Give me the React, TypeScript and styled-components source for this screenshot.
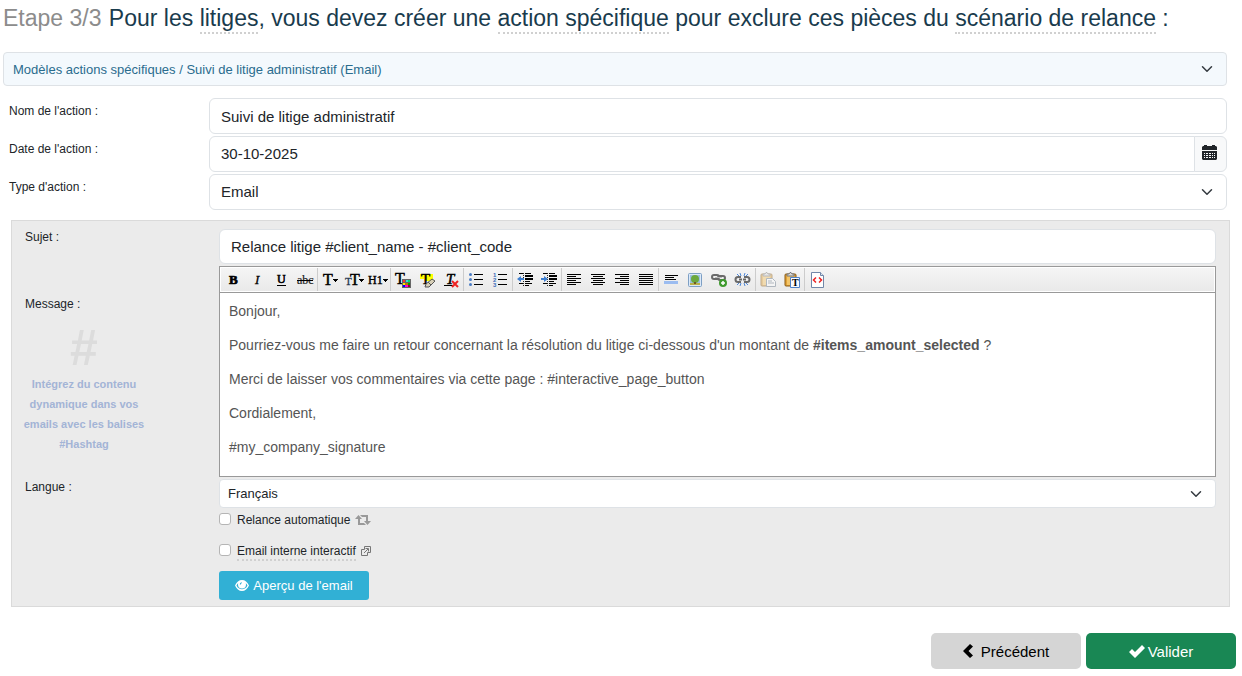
import React from "react";
import styled, { createGlobalStyle, css } from "styled-components";

const GlobalStyle = createGlobalStyle`
  *, *::before, *::after { box-sizing: border-box; }
  body {
    margin: 0;
    background: #fff;
    color: #212529;
    font-family: "Liberation Sans", Arial, sans-serif;
    font-size: 12px;
    line-height: 18px;
  }
  button, input, select { font-family: inherit; color: inherit; margin: 0; }
`;

const Page = styled.main`
  padding: 0 6px 7px 3px;
`;

const Title = styled.h1`
  margin: 0;
  height: 52px;
  padding-top: 4px;
  font-size: 23px;
  font-weight: 400;
  line-height: 28px;
  color: #193b4d;
  white-space: nowrap;
`;

const Step = styled.span`
  color: #8c8c8c;
  margin-right: 1px;
`;

const Hint = styled.span`
  display: inline-block;
  border-bottom: 2px dotted #d0d0d0;
`;

const Fields = styled.div`
  display: flex;
  flex-direction: column;
  gap: 2px;
  margin: 12px 9px 10px 0;
`;

const Row = styled.div`
  display: grid;
  grid-template-columns: 206px 1fr;
  align-items: start;
`;

const PanelRow = styled.div`
  display: grid;
  grid-template-columns: 207px 1fr;
  align-items: start;
`;

const Label = styled.label`
  padding: 4px 0 0 6px;
`;

const PanelLabel = styled.label`
  display: block;
  padding-left: 13px;
  line-height: 16px;
`;

const control = css`
  width: 100%;
  min-width: 0;
  border: 1px solid #dee2e6;
  border-radius: 6px;
  background: #fff;
  outline: none;
`;

const TextInput = styled.input<{ $compact?: boolean }>`
  ${control}
  height: ${(p) => (p.$compact ? 35 : 36)}px;
  padding: 0 11px;
  font-size: 15px;
`;

const DateGroup = styled.div`
  display: flex;
  ${TextInput} { border-radius: 6px 0 0 6px; padding-bottom: 2px; }
`;

const DateButton = styled.button`
  flex: none;
  width: 33px;
  height: 36px;
  margin-left: -1px;
  padding: 0 2px 4px 0;
  display: flex;
  align-items: center;
  justify-content: center;
  border: 1px solid #dee2e6;
  border-radius: 0 6px 6px 0;
  background: #f8f9fa;
`;

const SelectWrap = styled.div`
  position: relative;
  display: flex;
  width: 100%;
  > svg {
    position: absolute;
    right: 14px;
    top: 50%;
    margin-top: -6px;
    pointer-events: none;
  }
`;

type SelectKind = "model" | "field" | "small";
const selectKinds = {
  model: css`
    height: 34px; padding: 0 9px; font-size: 13px; border-radius: 4px;
    color: #2a6c8e; background: #f4f9fd;
  `,
  field: css`height: 36px; padding: 0 11px 2px; font-size: 15px;`,
  small: css`height: 29px; padding: 0 8px; font-size: 13px; border-radius: 4px;`,
};

const StyledSelect = styled.select<{ $kind: SelectKind }>`
  ${control}
  appearance: none;
  ${(p) => selectKinds[p.$kind]}
`;

const ModelBar = styled.div`
  margin-right: 9px;
`;

const Panel = styled.section`
  margin: 0 6px 26px 8px;
  padding: 8px 13px 6px 0;
  border: 1px solid #dadada;
  background: #ebebeb;
`;

const MessageRow = styled(PanelRow)`
  margin: 2px 0;
`;

const Aside = styled.div`
  padding-top: 30px;
`;

const HashNote = styled.p`
  width: 130px;
  margin: 10px 0 0 7px;
  text-align: center;
  font-size: 11px;
  font-weight: 700;
  line-height: 20px;
  color: #a3b4d6;
`;

const Hash = styled.span`
  display: block;
  height: 52px;
  font-size: 50px;
  line-height: 52px;
  color: #dcdcdc;
`;

const Editor = styled.div`
  height: 211px;
  display: flex;
  flex-direction: column;
  border: 1px solid #999;
  background: #fff;
`;

const Toolbar = styled.div`
  flex: none;
  display: flex;
  height: 26px;
  padding: 1px;
  border-bottom: 1px solid #999;
  background: linear-gradient(#f5f5f5, #e9e9e9);
  box-shadow: inset 0 0 0 1px #fff;
`;

const ToolGroup = styled.div`
  display: flex;
  & + & { border-left: 1px solid #ccc; }
`;

const ToolButton = styled.button`
  width: 24px;
  height: 24px;
  padding: 0 0 1px;
  display: flex;
  align-items: center;
  justify-content: center;
  border: 0;
  background: none;
  svg { overflow: visible; }
`;

const EditorBody = styled.div`
  flex: 1;
  padding: 10px 9px;
  font-size: 14px;
  line-height: 17px;
  color: #555;
  outline: none;
  p { margin: 0 0 17px; }
`;

const Options = styled.div`
  display: flex;
  flex-direction: column;
  align-items: flex-start;
`;

const CheckLabel = styled.label`
  display: flex;
  align-items: center;
  height: 21px;
  margin: 1px 0 9px;
  svg { margin-left: 5px; }
`;

const Check = styled.input`
  appearance: none;
  width: 12px;
  height: 12px;
  margin: 0 6px 2px 0;
  border: 1px solid #b5b5b5;
  border-radius: 3px;
  background: #fff;
`;

const DottedLabel = styled.span`
  line-height: 15px;
  margin-top: 3px;
  border-bottom: 2px dotted #d0d0d0;
`;

const PreviewButton = styled.button`
  width: 150px;
  height: 29px;
  margin-top: 1px;
  padding: 0;
  display: flex;
  align-items: center;
  justify-content: center;
  gap: 4px;
  border: 0;
  border-radius: 3px;
  background: #31b0d5;
  color: #fff;
  font-size: 13px;
`;

const Footer = styled.footer`
  display: flex;
  justify-content: flex-end;
  gap: 5px;
`;

const FooterButton = styled.button<{ $primary?: boolean }>`
  width: 150px;
  height: 36px;
  padding: 0;
  display: flex;
  align-items: center;
  justify-content: center;
  gap: ${(p) => (p.$primary ? 3 : 8)}px;
  border: 0;
  border-radius: 5px;
  background: ${(p) => (p.$primary ? "#198754" : "#d5d5d5")};
  color: ${(p) => (p.$primary ? "#fff" : "#000")};
  font-size: 15px;
`;

function Select({ kind, id, label, value }: { kind: SelectKind; id: string; label?: string; value: string }) {
  return (
    <SelectWrap>
      <StyledSelect $kind={kind} id={id} aria-label={label} defaultValue={value}>
        <option>{value}</option>
      </StyledSelect>
      <svg width="12" height="12" viewBox="0 0 16 16" fill="none" stroke="#343a40" strokeWidth="2" strokeLinecap="round" strokeLinejoin="round">
        <path d="m2 5 6 6 6-6" />
      </svg>
    </SelectWrap>
  );
}

const SERIF = "'Liberation Serif', 'Times New Roman', serif";

const Caret = () => <path d="M11 7h5v1h-1v1h-1v1h-1V9h-1V8h-1z" />;

const Lines = ({ rows }: { rows: [number, number, number][] }) => (
  <>
    {rows.map(([left, top, width], i) => (
      <rect key={i} x={left} y={top} width={width} height="1" />
    ))}
  </>
);

const Clipboard = () => (
  <>
    <rect x="1" y="2" width="11" height="12" rx="1" fill="#e0a33a" stroke="#8a5a14" />
    <rect x="3" y="4" width="7" height="9" fill="#f4c568" />
    <path d="M3 4V2h2L6 .5h1L8 2h2v2z" fill="#d8d8d8" stroke="#777" />
  </>
);

const indentRows: [number, number, number][] = [
  [2, 1, 5], [8, 1, 6], [8, 3, 8], [8, 4, 8], [8, 6, 8], [8, 7, 8], [8, 9, 5], [2, 11, 5], [8, 11, 7], [8, 13, 4],
];

const tools: { name: string; icon: React.ReactNode }[][] = [
  [
    { name: "Gras", icon: <text x="4" y="12" fontFamily={SERIF} fontWeight="700" fontSize="13" stroke="#000" strokeWidth=".7">B</text> },
    { name: "Italique", icon: <text x="6" y="12" fontFamily={SERIF} fontStyle="italic" fontSize="13" stroke="#000" strokeWidth=".3">I</text> },
    { name: "Souligné", icon: <><text x="4" y="11" fontFamily={SERIF} fontSize="12" stroke="#000" strokeWidth=".6">U</text><rect x="4" y="13" width="9" height="1" /></> },
    { name: "Barré", icon: <><text x="0" y="12" fontFamily={SERIF} fontSize="12" fill="#222" stroke="#222" strokeWidth=".2">abc</text><rect y="8" width="16" height="1" /></> },
  ],
  [
    { name: "Police", icon: <><text x="1" y="13" fontFamily={SERIF} fontSize="16" stroke="#000" strokeWidth=".5">T</text><Caret /></> },
    { name: "Taille", icon: <><text x="-1" y="13" fontFamily={SERIF} fontSize="11" fill="#24364f" stroke="#24364f" strokeWidth=".3">T</text><text x="4" y="13" fontFamily={SERIF} fontSize="16" stroke="#000" strokeWidth=".5">T</text><g transform="translate(2)"><Caret /></g></> },
    { name: "Format", icon: <><text x="-2" y="12" fontFamily={SERIF} fontSize="12" stroke="#000" strokeWidth=".4">H1</text><g transform="translate(2)"><Caret /></g></> },
  ],
  [
    { name: "Couleur du texte", icon: <>
      <text x="0" y="12" fontFamily={SERIF} fontSize="16" stroke="#000" strokeWidth=".5">T</text>
      <rect x="7" y="7" width="9" height="9" fill="#666" />
      <rect x="8" y="8" width="2" height="2" fill="#f33" /><rect x="11" y="8" width="2" height="2" fill="#3dd" /><rect x="13" y="8" width="2" height="2" fill="#0d6" />
      <rect x="8" y="11" width="2" height="2" fill="#fe0" /><rect x="10" y="11" width="3" height="2" fill="#b70" /><rect x="13" y="11" width="2" height="2" fill="#090" />
      <rect x="8" y="13" width="2" height="2" fill="#00f" /><rect x="10" y="13" width="3" height="2" fill="#f0c" /><rect x="13" y="13" width="2" height="2" fill="#903" />
    </> },
    { name: "Surlignage", icon: <>
      <path d="M1 2h13v7H5V7H1z" fill="#ff0" />
      <text x="2" y="12" fontFamily={SERIF} fontSize="15" stroke="#000" strokeWidth=".5">T</text>
      <path d="m6 15 1-3 6-5 3 2-6 6z" fill="#d8d0b8" stroke="#555" /><path d="m9 10 3 3" stroke="#555" />
    </> },
    { name: "Supprimer le format", icon: <>
      <text x="3" y="12" fontFamily={SERIF} fontStyle="italic" fontSize="15" stroke="#000" strokeWidth=".5">T</text>
      <rect x="1" y="13" width="9" height="1" />
      <path d="m9 9 6 6m0-6-6 6" stroke="#e22" strokeWidth="2" />
    </> },
  ],
  [
    { name: "Liste à puces", icon: <>
      <g fill="#4a7cc4"><circle cx="2.5" cy="2.5" r="1.5" /><circle cx="2.5" cy="7.5" r="1.5" /><circle cx="2.5" cy="12.5" r="1.5" /></g>
      <Lines rows={[[6, 2, 9], [6, 7, 9], [6, 12, 9]]} />
    </> },
    { name: "Liste numérotée", icon: <>
      <g fill="#3a6cb8" fontFamily="Liberation Sans, sans-serif" fontWeight="700" fontSize="6"><text x="1" y="5">1</text><text x="1" y="10">2</text><text x="1" y="15">3</text></g>
      <Lines rows={[[6, 2, 9], [6, 7, 9], [6, 12, 9]]} />
    </> },
  ],
  [
    { name: "Diminuer le retrait", icon: <>
      <Lines rows={indentRows} />
      <path d="M6.5 1v14" stroke="#222" strokeDasharray="1 1" /><path d="M0 7l4-3v2h3v2H4v2z" fill="#3e7fd0" />
    </> },
    { name: "Augmenter le retrait", icon: <>
      <Lines rows={indentRows} />
      <path d="M6.5 1v14" stroke="#222" strokeDasharray="1 1" /><path d="M7 7 3 4v2H0v2h3v2z" fill="#3e7fd0" />
    </> },
  ],
  [
    { name: "Aligner à gauche", icon: <Lines rows={[[1, 2, 14], [1, 4, 9], [1, 6, 14], [1, 8, 9], [1, 10, 14], [1, 12, 9]]} /> },
    { name: "Centrer", icon: <Lines rows={[[1, 2, 14], [3, 4, 10], [1, 6, 14], [3, 8, 10], [1, 10, 14], [3, 12, 10]]} /> },
    { name: "Aligner à droite", icon: <Lines rows={[[1, 2, 14], [6, 4, 9], [1, 6, 14], [6, 8, 9], [1, 10, 14], [6, 12, 9]]} /> },
    { name: "Justifier", icon: <Lines rows={[[1, 2, 14], [1, 4, 14], [1, 6, 14], [1, 8, 14], [1, 10, 14], [1, 12, 14]]} /> },
  ],
  [
    { name: "Ligne horizontale", icon: <>
      <Lines rows={[[2, 3, 13], [2, 5, 9], [2, 7, 11]]} />
      <rect x="1" y="9" width="14" height="3" fill="#9bbcf0" />
    </> },
    { name: "Image", icon: <>
      <rect x="1.5" y="1.5" width="13" height="13" rx="1" fill="#dce9f8" stroke="#7d9fc4" />
      <rect x="3" y="3" width="10" height="10" fill="#9cc0de" /><path d="M3 11h10v2H3z" fill="#b9b04a" />
      <circle cx="8" cy="7" r="4" fill="#6ca83c" /><path d="M7 10h2v2H7z" fill="#6d5a24" />
    </> },
    { name: "Insérer un lien", icon: <>
      <g fill="none" stroke="#6a6a6a" strokeWidth="2"><rect x="1" y="3" width="7" height="4" rx="2" /><rect x="7" y="4" width="7" height="4" rx="2" /></g>
      <path d="M4 5.5h7" stroke="#bbb" />
      <circle cx="12" cy="11" r="4" fill="#3f9a2e" /><path d="M12 9v4m-2-2h4" stroke="#fff" strokeWidth="1.5" />
    </> },
    { name: "Supprimer le lien", icon: <>
      <g fill="none" stroke="#6a6a6a" strokeWidth="2"><path d="M6 5H3a2 2 0 0 0 0 5h3M9 5h3a2 2 0 0 1 0 5H9M4 7.5h3M8 7.5h3" /></g>
      <path d="m5 1 1 3m4-3L9 4M2 2l2 2m9-2-2 2M5 14l1-3m4 3-1-3m-7 2 2-2m9 2-2-2" stroke="#4f87d6" />
    </> },
  ],
  [
    { name: "Coller", icon: <g opacity=".45"><Clipboard /><path d="M6.5 6.5h6l3 3v5h-9z" fill="#fff" stroke="#678" /><path d="M8 9h4M8 11h6" stroke="#678" /></g> },
    { name: "Coller comme texte", icon: <>
      <Clipboard /><path d="M6.5 5.5h9v10h-9z" fill="#f8fbff" stroke="#4f82c8" />
      <text x="8" y="14" fontFamily={SERIF} fontWeight="700" fontSize="10">T</text>
    </> },
  ],
  [
    { name: "Code source", icon: <>
      <path d="M2.500.5h9l3 3v12h-12z" fill="#fff" stroke="#7187a8" /><path d="M11.5.5v3h3" fill="#dde6f2" stroke="#7187a8" />
      <path d="M7 5.5 4.5 8 7 10.5M10 5.5 12.5 8 10 10.5" fill="none" stroke="#e22" strokeWidth="1.5" />
    </> },
  ],
];

export default function App() {
  return (
    <>
      <GlobalStyle />
      <Page>
        <Title>
          <Step>Etape 3/3</Step>{" "}
          Pour les <Hint>litiges</Hint>, vous devez créer une <Hint>action spécifique</Hint> pour exclure ces pièces du{" "}
          <Hint>scénario de relance</Hint> :
        </Title>

        <ModelBar>
          <Select kind="model" id="model" label="Modèle" value="Modèles actions spécifiques / Suivi de litige administratif (Email)" />
        </ModelBar>

        <Fields>
          <Row>
            <Label htmlFor="name">Nom de l'action :</Label>
            <TextInput id="name" defaultValue="Suivi de litige administratif" />
          </Row>
          <Row>
            <Label htmlFor="date">Date de l'action :</Label>
            <DateGroup>
              <TextInput id="date" defaultValue="30-10-2025" />
              <DateButton type="button" aria-label="Choisir une date">
                <svg width="15" height="15" viewBox="0 0 15 15" fill="#212529">
                  <path d="M0 2l1-1h1V0h3v1h5V0h3v1h1l1 1v3H0z" />
                  <path fillRule="evenodd" d="M0 6h15v8l-1 1H1l-1-1zM2 8v1h1V8zm2 0v1h2V8zm3 0v1h2V8zm3 0v1h1V8zm2 0v1h1V8zM2 10v1h1v-1zm2 0v1h2v-1zm3 0v1h2v-1zm3 0v1h1v-1zm2 0v1h1v-1zM2 12v1h1v-1zm2 0v1h2v-1zm3 0v1h2v-1zm3 0v1h1v-1zm2 0v1h1v-1z" />
                </svg>
              </DateButton>
            </DateGroup>
          </Row>
          <Row>
            <Label htmlFor="type">Type d'action :</Label>
            <Select kind="field" id="type" value="Email" />
          </Row>
        </Fields>

        <Panel>
          <PanelRow>
            <PanelLabel htmlFor="subject">Sujet :</PanelLabel>
            <TextInput $compact id="subject" defaultValue="Relance litige #client_name - #client_code" />
          </PanelRow>

          <MessageRow>
            <Aside>
              <PanelLabel as="span" id="message-label">Message :</PanelLabel>
              <HashNote>
                <Hash>#</Hash>
                Intégrez du contenu dynamique dans vos emails avec les balises #Hashtag
              </HashNote>
            </Aside>
            <Editor>
              <Toolbar role="toolbar" aria-label="Mise en forme">
                {tools.map((group, i) => (
                  <ToolGroup key={i}>
                    {group.map((tool) => (
                      <ToolButton key={tool.name} type="button" aria-label={tool.name}>
                        <svg width="16" height="16" viewBox="0 0 16 16">{tool.icon}</svg>
                      </ToolButton>
                    ))}
                  </ToolGroup>
                ))}
              </Toolbar>
              <EditorBody contentEditable suppressContentEditableWarning role="textbox" aria-multiline="true" aria-labelledby="message-label">
                <p>Bonjour,</p>
                <p>Pourriez-vous me faire un retour concernant la résolution du litige ci-dessous d'un montant de <b>#items_amount_selected</b> ?</p>
                <p>Merci de laisser vos commentaires via cette page : #interactive_page_button</p>
                <p>Cordialement,</p>
                <p>#my_company_signature</p>
              </EditorBody>
            </Editor>
          </MessageRow>

          <PanelRow>
            <PanelLabel htmlFor="language">Langue :</PanelLabel>
            <Options>
              <Select kind="small" id="language" value="Français" />
              <CheckLabel>
                <Check type="checkbox" />
                Relance automatique
                <svg width="16" height="10" viewBox="0 0 16 10" fill="#999">
                  <path d="M3.5 0 7 4H5v4h4l2 2H3V4H0zM12.5 10 9 6h2V2H7L5 0h8v6h3z" />
                </svg>
              </CheckLabel>
              <CheckLabel>
                <Check type="checkbox" />
                <DottedLabel>Email interne interactif</DottedLabel>
                <svg width="10" height="10" viewBox="0 0 10 10" fill="none" stroke="#777">
                  <path d="M3.5 3.5v-3h6v6h-3M3.5 3.5h-3v6h6v-3M3 7l4-4M4.5 2.5h3v3" />
                </svg>
              </CheckLabel>
              <PreviewButton type="button">
                <svg width="14" height="11" viewBox="0 0 14 11">
                  <path fill="#fff" fillRule="evenodd" d="M7 0c3 0 5.5 2 7 5.5C12.5 9 10 11 7 11S1.5 9 0 5.5C1.5 2 4 0 7 0zM3.3 3C2.5 3.7 1.9 4.5 1.5 5.5 2.7 8 4.6 9.3 7 9.3S11.3 8 12.5 5.5c-.4-1-1-1.8-1.8-2.5.2.5.3 1 .3 1.5a4 4 0 0 1-8 0c0-.5.1-1 .3-1.5zM6.8 2.2C5.6 2.3 4.8 3.1 4.8 4.4h1.1c0-.7.3-1 .9-1.1z" />
                </svg>
                Aperçu de l'email
              </PreviewButton>
            </Options>
          </PanelRow>
        </Panel>

        <Footer>
          <FooterButton type="button">
            <svg width="10" height="14" viewBox="0 0 10 14"><path d="M7 0l3 2.5L5.500 7 10 11.5 7 14 0 7z" /></svg>
            Précédent
          </FooterButton>
          <FooterButton type="button" $primary>
            <svg width="16" height="13" viewBox="0 0 16 13"><path fill="#fff" d="M13 0 16 3 6 13 0 7 3 4l3 3z" /></svg>
            Valider
          </FooterButton>
        </Footer>
      </Page>
    </>
  );
}
